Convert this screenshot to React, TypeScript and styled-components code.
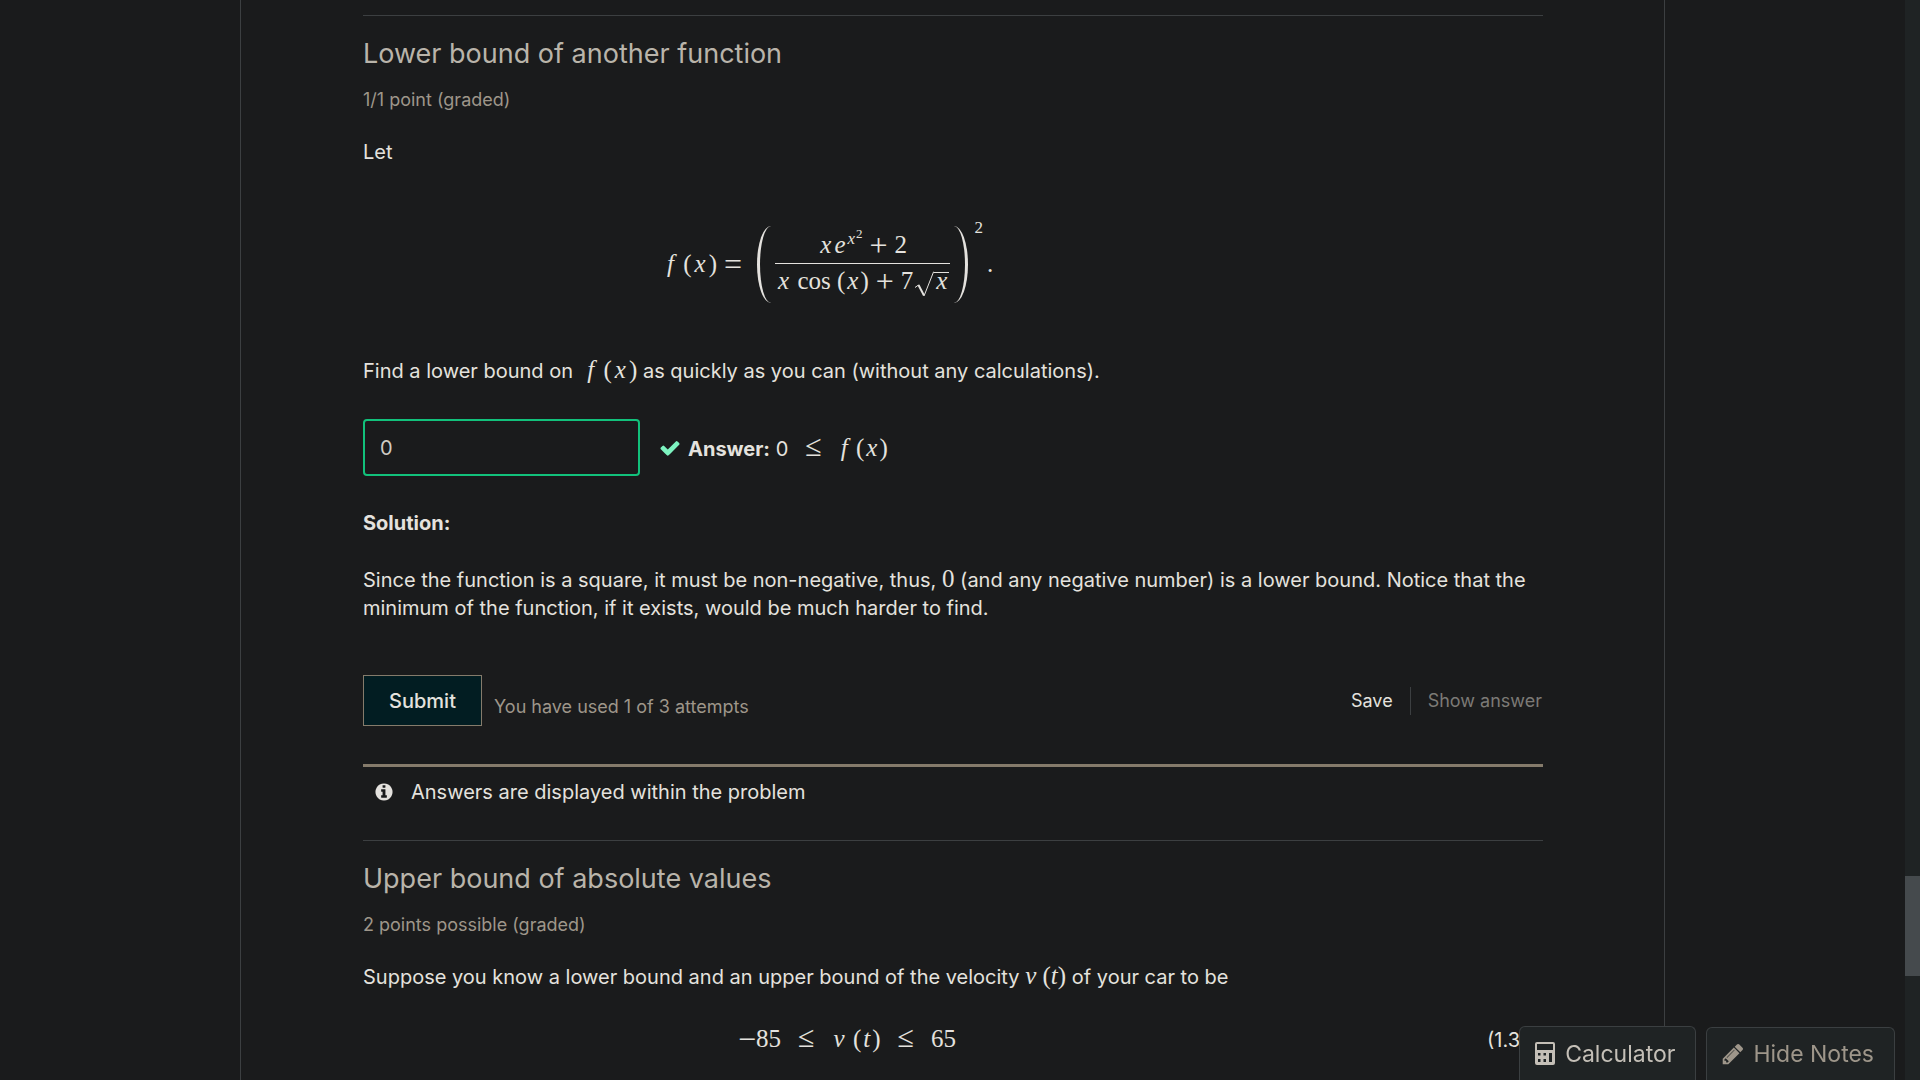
import React from "react";
import styled, { createGlobalStyle } from "styled-components";

const Global = createGlobalStyle`
  *, *::before, *::after { box-sizing: border-box; }
  body { margin: 0; background: #1a1b1c; color: #e4e2de; font-family: Inter, "Liberation Sans", sans-serif; font-size: 20px; line-height: 28px; }
  p, h2, h3 { margin: 0; }
  button, input { font: inherit; color: inherit; }
`;

const Page = styled.div`
  display: flex;
  height: 100vh;
  overflow: hidden;
`;
const Body = styled.div`
  flex: 1;
  min-width: 0;
  display: flex;
  justify-content: center;
`;
const Scrollbar = styled.div`
  width: 15px;
  background: #1f2324;
  display: flex;
  flex-direction: column;
  justify-content: flex-end;
  padding-bottom: 104px;
`;
const Thumb = styled.div`
  height: 100px;
  background: #454a4d;
`;
const Column = styled.main`
  width: 100%;
  max-width: 1425px;
  padding: 15px 121px 0 122px;
  border: solid #3c3f41;
  border-width: 0 1px;
`;
const Problem = styled.section`
  border-top: 1px solid #3c3f41;
  padding-top: 18px;
`;
const Title = styled.h2`
  font-size: 27px;
  font-weight: 400;
  line-height: 40px;
  color: #b9b4aa;
`;
const Points = styled.p`
  margin-top: 12px;
  font-size: 18px;
  color: #9e968a;
`;
const Text = styled.p<{ $top: number }>`
  margin-top: ${(p) => p.$top}px;
`;
const Equation = styled.div`
  display: flex;
  align-items: center;
  margin-top: 18px;
  height: 160px;
  padding-left: 301px;
`;
const Formula = styled.span`
  font-family: "Liberation Serif", serif;
  font-size: 25px;
  line-height: 24px;
  white-space: nowrap;
`;
const Var = styled.i<{ $pad?: number }>`
  padding: 0 ${(p) => p.$pad ?? 2}px;
`;
const Op = styled.span`
  padding: 0 7px;
  font-size: 32px;
  line-height: 0;
  vertical-align: -3px;
`;
const Rel = styled.span`
  padding: 0 17px;
  font-size: 30px;
  line-height: 0;
`;
const Minus = styled(Op)`
  padding: 0;
`;
const Power = styled.span`
  display: flex;
  align-items: center;
  gap: 4px;
  padding-left: 8px;
`;
const Exponent = styled(Formula)`
  align-self: flex-start;
  padding-left: 2px;
  font-size: 17px;
  line-height: 4px;
`;
const Fraction = styled.span`
  display: flex;
  flex-direction: column;
  text-align: center;
`;
const Numerator = styled(Formula)`
  padding: 3px 0 6px;
  border-bottom: 1px solid #e4e2de;
`;
const Denominator = styled(Formula)`
  padding: 5px 1px 2px;
`;
const Sup = styled.span<{ $level: 1 | 2 }>`
  font-size: ${(p) => (p.$level === 1 ? 17 : 13)}px;
  line-height: 0;
  vertical-align: ${(p) => (p.$level === 1 ? 9 : 15)}px;
`;
const Delimiter = styled.span<{ $side: "left" | "right" }>`
  width: 14px;
  height: 77px;
  border: 0 solid #e4e2de;
  border-${(p) => p.$side}-width: 3px;
  border-radius: ${(p) => (p.$side === "left" ? "100% 0 0 100% / 50% 0 0 50%" : "0 100% 100% 0 / 0 50% 50% 0")};
`;
const Radicand = styled.span`
  display: inline-block;
  border-top: 1px solid #e4e2de;
  line-height: 16px;
`;
const RadicalSign = styled.svg`
  vertical-align: -8px;
`;
const AnswerRow = styled.div`
  display: flex;
  align-items: center;
  gap: 7px;
  margin-top: 34px;
`;
const AnswerInput = styled.input`
  width: 277px;
  height: 57px;
  margin-right: 12px;
  padding: 0 15px;
  border: 2px solid #12c17b;
  border-radius: 4px;
  background: transparent;
  color: #cfcbc4;
`;
const Answer = styled.span`
  padding-top: 2px;
`;
const Actions = styled.div`
  display: flex;
  align-items: center;
  margin-top: 53px;
`;
const Submit = styled.button`
  width: 119px;
  height: 51px;
  border: 1px solid #857b6b;
  background: #021d22;
  font-weight: 500;
`;
const Attempts = styled.span`
  flex: 1;
  padding: 12px 0 0 12px;
  font-size: 18px;
  color: #9e968a;
`;
const Link = styled.button`
  border: 0;
  padding: 0 1px 0 17px;
  background: none;
  font-size: 18px;
  &:disabled { color: #7c7a76; border-left: 1px solid #3c3f41; }
  & + & { margin-left: 16px; }
`;
const Notice = styled.div`
  display: flex;
  align-items: center;
  gap: 17px;
  height: 76px;
  margin-top: 38px;
  padding: 0 11px 23px;
  border-top: 3px solid #857b6b;
`;
const Range = styled.div`
  display: flex;
  align-items: baseline;
  justify-content: space-between;
  margin-top: 35px;
  padding: 0 23px 0 375px;
`;
const Tools = styled.aside`
  position: fixed;
  right: 25px;
  bottom: 0;
  display: flex;
  align-items: flex-end;
  gap: 10px;
`;
const Tool = styled.button<{ $dim?: boolean }>`
  display: flex;
  align-items: center;
  gap: ${(p) => (p.$dim ? 8 : 10)}px;
  height: ${(p) => (p.$dim ? 53 : 54)}px;
  padding: 0 20px 0 ${(p) => (p.$dim ? 14 : 15)}px;
  border: 1px solid #3b3f41;
  border-bottom: 0;
  border-radius: 6px 6px 0 0;
  background: #1f2324;
  font-size: 23px;
  color: ${(p) => (p.$dim ? "#9e968a" : "#c4bfb7")};
`;

const Glyph = ({ d, size, color = "currentColor" }: { d: string; size: number; color?: string }) => (
  <svg width={size} height={size} viewBox="0 0 1792 1792" fill={color} aria-hidden="true">
    <path d={d} />
  </svg>
);
const CHECK =
  "M1671 566q0 40-28 68l-724 724-136 136q-28 28-68 28t-68-28l-136-136-362-362q-28-28-28-68t28-68l136-136q28-28 68-28t68 28l294 295 656-657q28-28 68-28t68 28l136 136q28 28 28 68z";
const INFO =
  "M1152 1376v-160q0-14-9-23t-23-9h-96v-512q0-14-9-23t-23-9h-320q-14 0-23 9t-9 23v160q0 14 9 23t23 9h96v320h-96q-14 0-23 9t-9 23v160q0 14 9 23t23 9h448q14 0 23-9t9-23zm-128-896v-160q0-14-9-23t-23-9h-192q-14 0-23 9t-9 23v160q0 14 9 23t23 9h192q14 0 23-9t9-23zm640 416q0 209-103 385.5t-279.5 279.5-385.5 103-385.5-103-279.5-279.5-103-385.5 103-385.5 279.5-279.5 385.5-103 385.5 103 279.5 279.5 103 385.5z";
const PENCIL =
  "M491 1536l91-91-235-235-91 91v107h128v128h107zm523-928q0-22-22-22-10 0-17 7l-542 542q-7 7-7 17 0 22 22 22 10 0 17-7l542-542q7-7 7-17zm-54-192l416 416-832 832h-416v-416zm683 96q0 53-37 90l-166 166-416-416 166-165q36-38 90-38 53 0 91 38l235 234q37 39 37 91z";

const CalculatorIcon = () => (
  <svg width="20" height="23" viewBox="0 0 20 23" aria-hidden="true">
    <path
      fill="currentColor"
      fillRule="evenodd"
      d="M2 0h16a2 2 0 0 1 2 2v19a2 2 0 0 1-2 2H2a2 2 0 0 1-2-2V2a2 2 0 0 1 2-2zM2 2v6h16v-6zM3 11v2.500h2.500v-2.500zM8.500 11v2.500h2.500v-2.500zM14 11v9h3v-9zM3 17v3h2.500v-3zM8.500 17v3h2.500v-3z"
    />
  </svg>
);

const Call = ({ fn, arg, pad }: { fn: string; arg: string; pad: number }) => (
  <Formula>
    <Var $pad={pad}>{fn}</Var> (<Var $pad={pad}>{arg}</Var>)
  </Formula>
);

export default function App() {
  return (
    <Page>
      <Global />
      <Body>
        <Column>
          <Problem>
            <Title>Lower bound of another function</Title>
            <Points>1/1 point (graded)</Points>
            <Text $top={24}>Let</Text>
            <Equation>
              <Formula>
                <Call fn="f" arg="x" pad={3} />
                <Op>=</Op>
              </Formula>
              <Power>
                <Delimiter $side="left" />
                <Fraction>
                  <Numerator>
                    <Var>x</Var>
                    <Var $pad={1}>e</Var>
                    <Sup $level={1}><Var $pad={1}>x</Var></Sup>
                    <Sup $level={2}>2</Sup>
                    <Op>+</Op>2
                  </Numerator>
                  <Denominator>
                    <Var>x</Var> cos (<Var>x</Var>)<Op>+</Op>7
                    <RadicalSign width="21" height="26" viewBox="0 0 21 26" fill="none" stroke="currentColor" aria-hidden="true">
                      <path d="M2 16.500l3.500-2.500" />
                      <path d="M5.500 14l5.500 10.500" strokeWidth="2" />
                      <path d="M11 25L20.500 1H21" />
                    </RadicalSign>
                    <Radicand>
                      <Var>x</Var>
                    </Radicand>
                  </Denominator>
                </Fraction>
                <Delimiter $side="right" />
                <Exponent>2</Exponent>
                <Formula>.</Formula>
              </Power>
            </Equation>
            <Text $top={13}>
              Find a lower bound on&nbsp; <Call fn="f" arg="x" pad={3} /> as quickly as you can (without any calculations).
            </Text>
            <AnswerRow>
              <AnswerInput aria-label="Lower bound" defaultValue="0" />
              <Glyph d={CHECK} size={22} color="#7df3c0" />
              <Answer>
                <b>Answer:</b> 0
                <Formula>
                  <Rel>≤</Rel>
                  <Call fn="f" arg="x" pad={2} />
                </Formula>
              </Answer>
            </AnswerRow>
            <Text $top={33}><b>Solution:</b></Text>
            <Text $top={29}>
              Since the function is a square, it must be non-negative, thus, <Formula>0</Formula> (and any negative number) is a lower bound. Notice that the minimum of the function, if it exists, would be much harder to find.
            </Text>
            <Actions>
              <Submit>Submit</Submit>
              <Attempts>You have used 1 of 3 attempts</Attempts>
              <Link>Save</Link>
              <Link disabled>Show answer</Link>
            </Actions>
            <Notice>
              <Glyph d={INFO} size={20} />
              Answers are displayed within the problem
            </Notice>
          </Problem>
          <Problem>
            <Title>Upper bound of absolute values</Title>
            <Points>2 points possible (graded)</Points>
            <Text $top={24}>
              Suppose you know a lower bound and an upper bound of the velocity <Call fn="v" arg="t" pad={0} /> of your car to be
            </Text>
            <Range>
              <Formula>
                <Minus>−</Minus>85<Rel>≤</Rel>
                <Call fn="v" arg="t" pad={2} />
                <Rel>≤</Rel>65
              </Formula>
              <span>(1.3</span>
            </Range>
          </Problem>
        </Column>
      </Body>
      <Scrollbar>
        <Thumb />
      </Scrollbar>
      <Tools>
        <Tool>
          <CalculatorIcon />
          Calculator
        </Tool>
        <Tool $dim>
          <Glyph d={PENCIL} size={24} />
          Hide Notes
        </Tool>
      </Tools>
    </Page>
  );
}
